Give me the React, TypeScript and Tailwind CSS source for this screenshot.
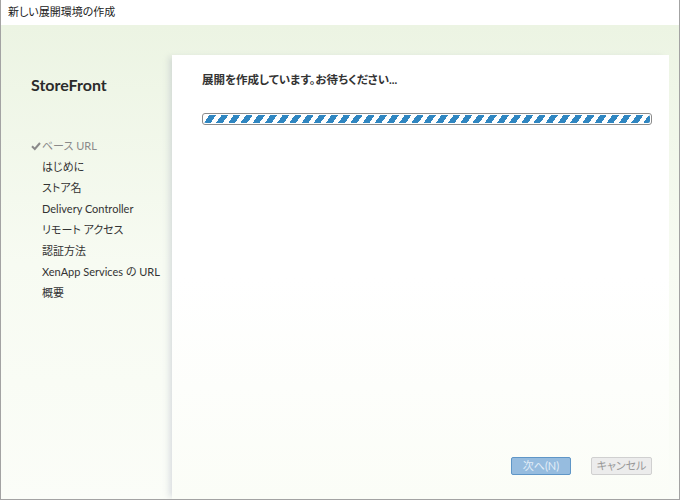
const steps = [
  "はじめに",
  "ストア名",
  "Delivery Controller",
  "リモート アクセス",
  "認証方法",
  "XenApp Services の URL",
  "概要",
];

export default function App() {
  return (
    <div
      className="w-[680px] h-[500px] flex flex-col border border-t-0 border-[#a3a3a3] bg-white text-[#333] overflow-hidden [font-feature-settings:'palt']"
      style={{ fontFamily: 'Lato, "Noto Sans CJK JP", sans-serif' }}
    >
      {/* title bar */}
      <div className="h-[25px] shrink-0 flex items-center pl-[7px] text-[11px] text-[#222]">
        新しい展開環境の作成
      </div>

      <div className="flex-1 flex bg-gradient-to-b from-[#ecf4e3] via-[#f7fbf2] to-[#fbfdf8]">
        {/* sidebar */}
        <div className="w-[171px] shrink-0 pl-[30px] pt-[49px]">
          <div className="text-[16px] font-bold text-[#2b2b2b] leading-[22px]">StoreFront</div>
          <ul className="mt-[39px] text-[11px] leading-[21px] whitespace-nowrap">
            <li className="flex items-center text-[#8a8a8a]">
              <svg width="10" height="10" viewBox="0 0 10 10" className="mr-[1px]">
                <path d="M1 5.2 L3.8 8 L9 2" fill="none" stroke="#8a8a8a" strokeWidth="2" />
              </svg>
              <span>ベース URL</span>
            </li>
            {steps.map((s) => (
              <li key={s} className="pl-[11px] text-[#333]">
                {s}
              </li>
            ))}
          </ul>
        </div>

        {/* main panel */}
        <div className="flex-1 mt-[30px] mr-[10px] flex flex-col bg-gradient-to-b from-white via-white to-[#fbfdf7] shadow-[-5px_0_6px_-2px_rgba(150,155,175,0.3)]">
          <div className="pl-[30px] pt-[17px] text-[11.5px] font-bold text-[#333] leading-[16px]">
            展開を作成しています。お待ちください...
          </div>
          <div className="ml-[30px] mr-[17px] mt-[25px] h-[12px] rounded-[3px] border border-[#8c8c8c] p-[1px] bg-white">
            <div className="h-full w-full rounded-[2px] bg-[repeating-linear-gradient(-55deg,#2f86c1_0px,#2f86c1_5.5px,#ffffff_5.5px,#ffffff_10px)]" />
          </div>

          <div className="flex-1" />

          <div className="flex justify-end gap-[20px] pr-[17px] pb-[24px]">
            <button className="w-[60px] h-[18px] rounded-[2px] border border-[#5f96c7] bg-[#96bcdf] text-[11px] leading-[16px] text-[#e2edf7]">
              次へ(N)
            </button>
            <button className="w-[61px] h-[18px] rounded-[2px] border border-[#d0d0d0] bg-[#ececec] text-[11px] leading-[16px] text-[#999]">
              キャンセル
            </button>
          </div>
        </div>
      </div>
    </div>
  );
}
